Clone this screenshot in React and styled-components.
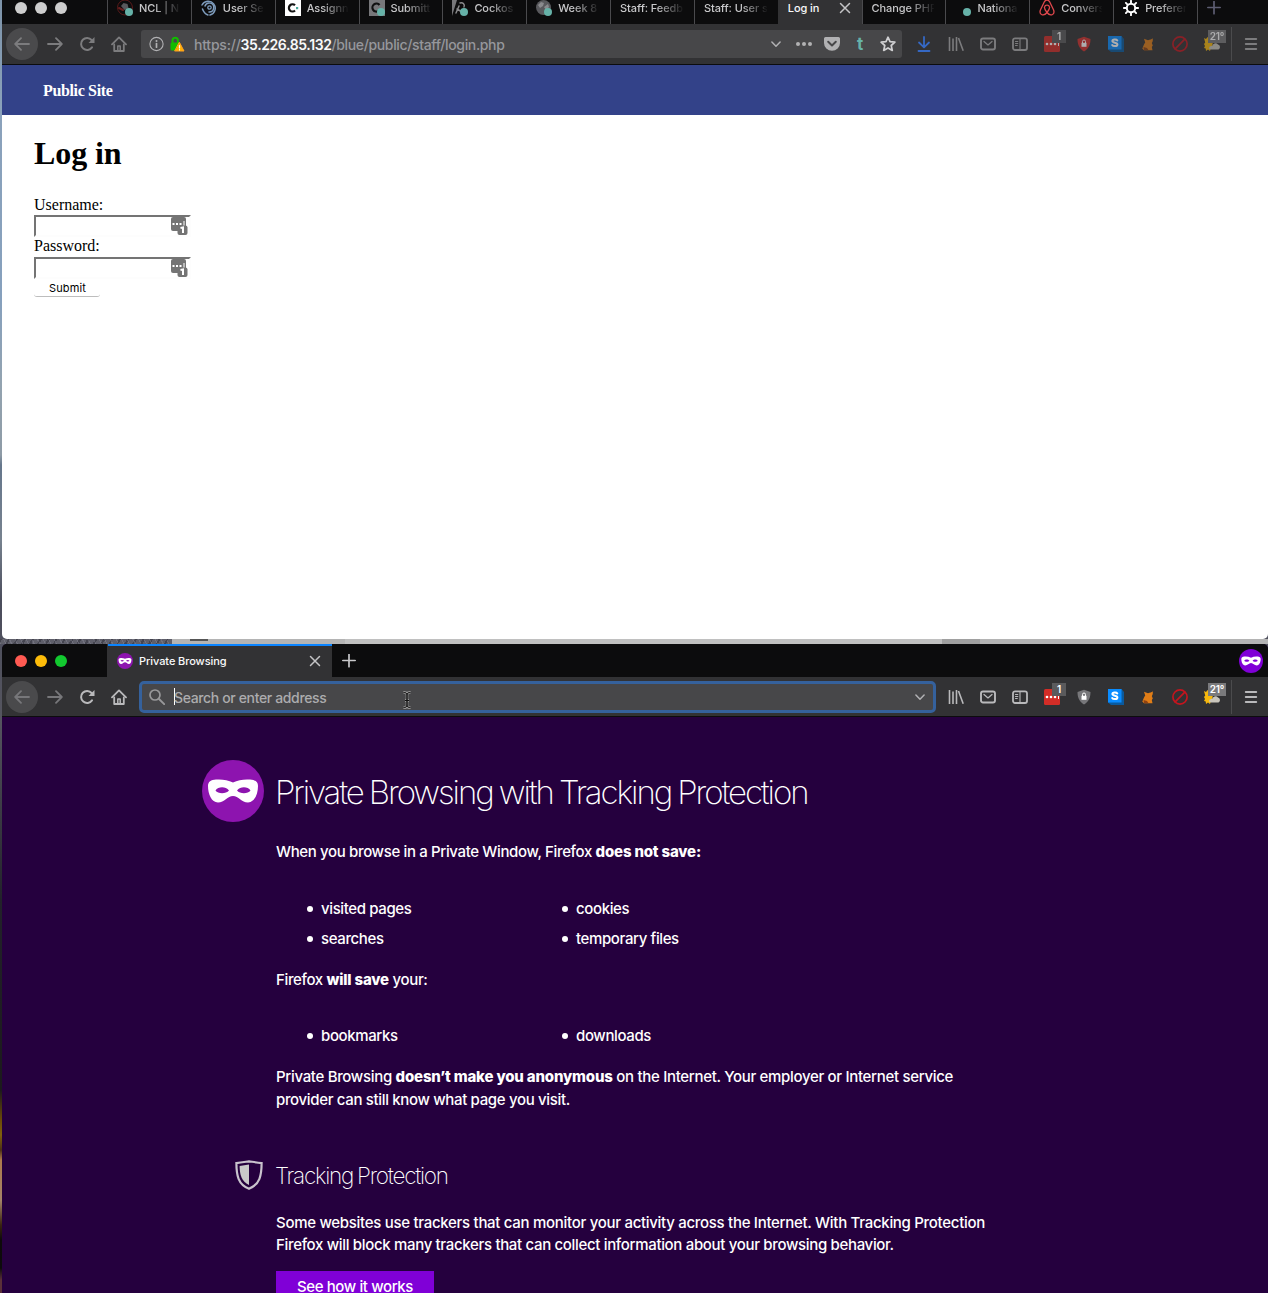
import React from "react";
import styled, { createGlobalStyle, css } from "styled-components";

const Global = createGlobalStyle`
  * { box-sizing: border-box; }
  body { margin: 0; width: 1268px; height: 1293px; overflow: hidden; background: #0c0c0d; }
  h1, h2, p, ul { margin: 0; padding: 0; font-weight: inherit; }
`;

const ui = `Inter, "Open Sans", sans-serif`;
const serif = `"Liberation Serif", "Times New Roman", serif`;

const Desktop = styled.div`
  height: 1293px;
  overflow: hidden;
  display: flex;
  flex-direction: column;
  padding-left: 2px;
  background: linear-gradient(180deg, #7d93a8 0, #8ba2bb 110px, #86a0bd 300px, #93a3b0 385px, #8e9ba6 455px, #66778c 465px, #77828f 540px, #4b4d5c 600px, #55555f 720px, #22222a 900px, #1c1a1c 1090px, #6b4a08 1120px, #80600c 1135px, #4c3014 1150px, #ad7a4c 1160px, #a58468 1200px, #3a2410 1225px, #0e0a0a 1240px, #0d0b0c 1268px, #5a3038 1280px);
`;

const Window = styled.section`
  display: flex;
  flex-direction: column;
  flex: none;
  overflow: hidden;
  ${(p) =>
    p.$back
      ? css`margin-top: -9px; height: 648px; border-radius: 0 0 5px 5px; background: #fff;`
      : css`height: 649px; border-radius: 5px 5px 0 0; background: #25003e;`}
`;

const Strip = styled.div`
  height: 33px;
  flex: none;
  display: flex;
  background: #0c0c0d;
  color: #cfcfd1;
`;

const Lights = styled.div`
  width: 105px;
  flex: none;
  padding-left: 13px;
  display: flex;
  align-items: center;
  gap: 8px;
`;
const Light = styled.i`
  width: 12px;
  height: 12px;
  border-radius: 50%;
  background: ${(p) => p.$c};
`;

const Tab = styled.div`
  width: ${(p) => p.$w || 83.85}px;
  flex: none;
  display: flex;
  align-items: center;
  gap: 6px;
  padding: 0 11px 0 9px;
  border-left: 1px solid ${(p) => (p.$active ? "#323234" : "#4a4a4d")};
  background: ${(p) => (p.$active ? "#323234" : "transparent")};
  color: ${(p) => (p.$active ? "#f9f9fa" : "#c8c8ca")};
  box-shadow: ${(p) => (p.$line ? "inset 0 2px 0 #0a84ff" : "none")};
  svg { flex: none; }
`;
const TabTitle = styled.span`
  flex: 1;
  overflow: hidden;
  white-space: nowrap;
  font: 500 11px/16px ${ui};
  letter-spacing: -0.08px;
  mask-image: ${(p) => (p.$fade ? "linear-gradient(90deg, #000 calc(100% - 26px), transparent 102%)" : "none")};
`;
const NewTab = styled.div`
  width: 33px;
  display: flex;
  align-items: center;
  justify-content: center;
  border-left: 1px solid ${(p) => (p.$sep ? "#4a4a4d" : "transparent")};
`;
const StripEnd = styled.div`
  margin-left: auto;
  padding-right: 5px;
  display: flex;
  align-items: center;
`;

const Toolbar = styled.div`
  height: ${(p) => (p.$back ? 41 : 40)}px;
  flex: none;
  display: flex;
  align-items: center;
  background: #323234;
  border-bottom: 1px solid #0c0c0d;
  color: ${(p) => (p.$back ? "#7c7c7e" : "#b9b9bb")};
`;
const Nav = styled.div`
  width: 32px;
  height: 32px;
  flex: none;
  display: flex;
  align-items: center;
  justify-content: center;
  border-radius: 50%;
  margin-right: ${(p) => (p.$round ? 1 : 0)}px;
  background: ${(p) => (p.$round ? "#4a4a4c" : "transparent")};
  color: ${(p) => (p.$dim ? "#77777a" : "inherit")};
`;
const NavGroup = styled.div`
  display: flex;
  flex: none;
  width: ${(p) => p.$w}px;
  padding-left: 4px;
`;
const UrlBar = styled.div`
  flex: none;
  display: flex;
  align-items: center;
  background: #474749;
  color: #b1b1b3;
  font: 500 14px/20px ${ui};
  ${(p) =>
    p.$focus
      ? css`width: 797px; height: 32px; border: 3px solid #35619c; border-radius: 5px; padding: 0 8px 0 7px;`
      : css`width: 761px; height: 28px; border-radius: 3px; padding: 0 0 0 7px;`}
`;
const Identity = styled.span`
  display: flex;
  gap: 5px;
  align-items: center;
`;
const Url = styled.span`
  flex: 1;
  white-space: nowrap;
  padding-top: 2px;
  margin-left: ${(p) => p.$ml}px;
  color: ${(p) => p.$c || "#96979c"};
  letter-spacing: -0.36px;
  b { color: #f9f9fa; font-weight: 600; letter-spacing: -0.4px; }
`;
const Scheme = styled.span`
  letter-spacing: -0.22px;
`;
const Caret = styled.i`
  width: 1px;
  height: 17px;
  background: #fff;
  margin-left: 9px;
`;
const UrlAct = styled.span`
  width: 28px;
  display: flex;
  justify-content: center;
  color: ${(p) => p.$c || "#b1b1b3"};
  font: 700 17px/18px ${ui};
`;
const Tools = styled.div`
  display: flex;
  flex: none;
  align-items: center;
  margin-left: ${(p) => p.$ml}px;
`;
const Tool = styled.div`
  width: ${(p) => p.$w || 32}px;
  height: 32px;
  position: relative;
  display: flex;
  align-items: center;
  justify-content: center;
  opacity: ${(p) => (p.$faded ? 0.6 : 1)};
`;
const Badge = styled.span`
  position: absolute;
  top: 2px;
  left: ${(p) => p.$l}px;
  width: ${(p) => p.$w}px;
  height: 13px;
  background: ${(p) => p.$c || "#5a5a5c"};
  color: #fff;
  font: 600 10px/13px ${ui};
  letter-spacing: -0.2px;
  text-align: center;
`;
const Divider = styled.i`
  width: 1px;
  height: 34px;
  margin-left: 3px;
  background: #4b4b4d;
`;

const SiteBar = styled.nav`
  height: 50px;
  flex: none;
  padding: 16px 0 0 41px;
  background: #334289;
  color: #fff;
  font: 700 16px/19px ${serif};
  span { letter-spacing: -0.35px; }
`;
const Login = styled.main`
  padding: 20px 0 0 32px;
  display: flex;
  flex-direction: column;
  align-items: flex-start;
  color: #000;
  font: 400 16px/18px ${serif};
  h1 { font: 700 32px/37px ${serif}; letter-spacing: -0.1px; margin-bottom: 24px; }
`;
const Field = styled.label`
  display: flex;
  flex-direction: column;
  height: ${(p) => p.$h}px;
  gap: ${(p) => p.$gap}px;
`;
const Input = styled.span`
  width: 157px;
  height: 22px;
  flex: none;
  display: flex;
  justify-content: flex-end;
  padding-right: 1px;
  border: 2px solid;
  border-color: #747474 #fdfdfd #fdfdfd #747474;
`;
const Submit = styled.button`
  width: 66px;
  height: 18px;
  padding: 0 0 0 1px;
  border: 0;
  border-bottom: 1px solid #bdbdbd;
  border-radius: 3px;
  background: #fff;
  color: #000;
  font: 400 11px/16px ${ui};
  letter-spacing: 0.1px;
`;

const Gap = styled.div`
  height: 5px;
  flex: none;
  display: flex;
  margin-left: -2px;
  background: #b4b4b4;
`;
const GapBit = styled.i`
  width: ${(p) => p.$w}px;
  height: ${(p) => p.$h || 5}px;
  background: ${(p) => p.$c};
`;
const Rock = styled(GapBit)`
  background:
    repeating-linear-gradient(63deg, rgba(150, 150, 165, 0.35) 0 1px, transparent 1px 5px),
    repeating-linear-gradient(118deg, rgba(30, 30, 40, 0.4) 0 2px, transparent 2px 7px),
    #5f5f6a;
`;

const Private = styled.main`
  color: #fff;
  font: 500 15px/22px ${ui};
  letter-spacing: -0.38px;
  padding: 43px 0 0 200px;
`;
const TitleRow = styled.div`
  display: flex;
  align-items: flex-start;
  gap: ${(p) => p.$gap}px;
  margin-left: ${(p) => p.$ml || 0}px;
  margin-top: ${(p) => p.$mt || 0}px;
  svg { flex: none; }
`;
const Title = styled.h1`
  font: 200 ${(p) => p.$s}px/40px ${ui};
  letter-spacing: ${(p) => p.$ls}px;
  word-spacing: -1px;
  margin-top: ${(p) => p.$mt}px;
  white-space: nowrap;
`;
const Body = styled.div`
  padding-left: 74px;
`;
const Line = styled.p`
  height: ${(p) => p.$h || 22}px;
  line-height: ${(p) => p.$h || 22}px;
  margin-top: ${(p) => p.$mt || 0}px;
  white-space: nowrap;
  letter-spacing: ${(p) => p.$ls || -0.36}px;
  b { font-weight: 800; letter-spacing: -0.18px; }
`;
const List = styled.ul`
  display: grid;
  grid-template-columns: 255px 255px;
  margin-top: ${(p) => p.$mt}px;
  padding-left: 31px;
  list-style: none;
  line-height: 30px;
`;
const Item = styled.li`
  display: flex;
  align-items: center;
  gap: 7px;
  height: 30px;
  &::before { content: ""; width: 6px; height: 6px; margin: 0 1px 1px 0; border-radius: 50%; background: #fff; }
`;
const Cta = styled.div`
  width: 158px;
  height: 40px;
  margin-top: 15px;
  padding-top: 5px;
  background: #8000d7;
  text-align: center;
  white-space: nowrap;
`;
const Pointer = styled.span`
  position: absolute;
  left: 402px;
  top: 691px;
  line-height: 0;
`;

/* Icons */
const Ic = ({ s = 16, vb = "0 0 16 16", children, ...r }) => (
  <svg width={s} height={s} viewBox={vb} fill="none" stroke="currentColor" strokeWidth="2" strokeLinecap="round" strokeLinejoin="round" {...r}>
    {children}
  </svg>
);
const Back = () => <Ic><path d="M15 8H1.5M7 2.2 1.2 8 7 13.8" strokeWidth="1.8" /></Ic>;
const Fwd = () => <Ic><path d="M1 8h13.5M9 2.2 14.8 8 9 13.8" strokeWidth="1.8" /></Ic>;
const Reload = () => (
  <Ic><path d="M13 11.400A6 6 0 1 1 12.600 4" /><path d="M15.500 1v6h-6z" fill="currentColor" stroke="none" /></Ic>
);
const Home = () => (
  <Ic><path d="M1 8.4 8 1.4l7 7" strokeWidth="1.8" /><path d="M3.2 8.5V15h9.6V8.5" strokeWidth="1.8" /><path d="M6.800 14.500V10h2.400v4.500" strokeWidth="1.500" /></Ic>
);
const Info = () => (
  <Ic><circle cx="8.500" cy="8" r="6.600" strokeWidth="1.100" /><path d="M8.500 7.500v3.700" strokeWidth="1.700" /><circle cx="8.500" cy="4.900" r="1" fill="currentColor" stroke="none" /></Ic>
);
const Lock = () => (
  <Ic><path d="M3.500 7V4.500a2.700 2.700 0 0 1 5.400 0V7" stroke="#12bc00" /><rect x="1.500" y="6.500" width="9" height="8" rx="1.500" fill="#12bc00" stroke="none" /><path d="m10.500 6.500 4.500 8.500H6z" fill="#ffb000" stroke="#ffa020" strokeWidth="1" /><path d="M10.500 9.500v2.500M10.500 13.700v.2" stroke="#fff" strokeWidth="1.200" /></Ic>
);
const Chevron = () => <Ic s={10} vb="0 0 10 10"><path d="M.9 3 5 7.200 9.100 3" strokeWidth="1.500" /></Ic>;
const Dots = () => <Ic><g fill="currentColor" stroke="none"><circle cx="2" cy="8" r="2" /><circle cx="8" cy="8" r="2" /><circle cx="14" cy="8" r="2" /></g></Ic>;
const Pocket = () => <Ic><path d="M1.500 1h13A1.500 1.500 0 0 1 16 2.500V7A8 7.800 0 0 1 0 7V2.500A1.500 1.500 0 0 1 1.500 1z" fill="#b1b1b3" stroke="none" /><path d="M4.200 5.800 8 9.400l3.800-3.600" stroke="#474749" /></Ic>;
const Star = () => <Ic stroke="#d0d0d2"><path d="m8 1.200 2 4.500 4.900.5-3.700 3.300 1.100 4.900L8 11.900l-4.300 2.500 1.100-4.900L1.100 6.200 6 5.700z" strokeWidth="1.700" /></Ic>;
const Download = () => <Ic stroke="#3568c4"><path d="M8 1v10M3 6.500 8 11.300l5-4.800M2.500 15h11" strokeWidth="1.800" /></Ic>;
const Library = () => <Ic><path d="M1.500 1v14M5 2.500V15M8.500 1v14M10.500 2l4.700 12.800" strokeWidth="1.600" strokeLinecap="butt" /></Ic>;
const Mail = () => <Ic><rect x="1" y="2.500" width="14" height="11" rx="2" strokeWidth="1.900" /><path d="m4 5.500 4 3.400 4-3.400" strokeWidth="1.300" /></Ic>;
const Sidebar = () => <Ic><rect x="1" y="2.300" width="14" height="11.700" rx="2" strokeWidth="1.800" /><path d="M8 3v10.500M3.500 5.500h2.300M3.500 7.500h2.300M3.500 9.500h1.800" strokeWidth="1.100" /></Ic>;
const LastPass = () => <Ic><rect width="16" height="16" rx="1.500" fill="#d32d27" stroke="none" /><g fill="#fff" stroke="none"><circle cx="3" cy="8" r="1.300" /><circle cx="7" cy="8" r="1.300" /><circle cx="11" cy="8" r="1.300" /><path d="M14 6h1v4h-1z" /></g></Ic>;
const ShieldLock = ({ c }) => <Ic><path d="M8 .8 14.500 3c0 6-2.200 10-6.500 12.500C3.700 13 1.500 9 1.500 3z" fill={c} stroke="none" /><rect x="5.500" y="6.800" width="5" height="4" fill="#fff" stroke="none" /><path d="M6.500 7V5.500a1.500 1.500 0 0 1 3 0V7" stroke="#fff" strokeWidth="1" /></Ic>;
const SIcon = () => <Ic><path d="M0 0h13.500L16 3v13H3l-3-2.500z" fill="#0a5a9e" stroke="none" /><path d="M0 0h13.500v13.500H0z" fill="#0a8cff" stroke="none" /><path d="M9.300 4.400C8.500 3 4.400 3 4.400 5.100c0 2.200 5 1.200 5 3.400 0 2.100-4.300 2-5.200.5" stroke="#fff" strokeWidth="2" /></Ic>;
const Fox = () => <Ic><path d="M12.700 2.300C11.500 3.500 10 3.800 8 4.200L4 2.800l1.200 3.700C4 8 3.300 10.500 2.300 12.500l1.700 1.700h8.500l-.7-3.200 1-1.500-1-2.500c1-1 1.200-2.500.9-4.700z" fill="#e07d17" stroke="none" /><path d="m3.500 11 3.500 1 1.500 2.200H4z" fill="#8e4312" stroke="none" /></Ic>;
const NoEntry = () => <Ic stroke="#c4151e"><circle cx="8" cy="8" r="7.100" strokeWidth="1.700" /><path d="M3.200 12.800 12.800 3.200" strokeWidth="1.700" /></Ic>;
const Weather = () => <Ic><path d="M0 2l2 1 1.500-2L5 3l2-1.500V4l2 .5-.5 4L7 12l-1 3-2-1.500L2 15l-.3-2.500L0 12l1-2-1-2 1.200-1.500z" fill="#f7b90d" stroke="none" /><path d="M5 12a2.500 2.500 0 0 1 3-2 3.500 3.500 0 0 1 6-1.500 2.700 2.700 0 0 1 .5 5H7a2 2 0 0 1-2-1.500z" fill="#c9c5bb" stroke="none" /></Ic>;
const Menu = () => <Ic><path d="M2.800 3h10.400M2.800 8h10.400M2.800 13h10.400" strokeWidth="2" /></Ic>;
const Close = () => <Ic s={12} vb="0 0 12 12"><path d="m1.500 1.500 9 9m0-9-9 9" strokeWidth="1.500" stroke="#c4c4c6" /></Ic>;
const Plus = ({ c }) => <Ic s={14} vb="0 0 14 14" stroke={c}><path d="M7 .3v12.400M.8 6.500h12.400" strokeWidth="1.700" /></Ic>;
const Search = () => <Ic><circle cx="6" cy="6" r="5" strokeWidth="1.700" stroke="#98989a" /><path d="m10 10 5.200 5.200" strokeWidth="1.900" stroke="#98989a" /></Ic>;
const Mask = ({ s, c }) => (
  <svg width={s} height={s} viewBox="0 0 62 62">
    <circle cx="31" cy="31" r="31" fill={c} />
    <path fillRule="evenodd" fill="#fff" d="M31 22.500c5-2.500 11-3.500 17-3 5 .5 8 2 8 6.500 0 8-3.500 16.500-10 16.500-6.500 0-9.500-6.500-15-6.500S22.500 42.500 16 42.500C9.500 42.500 6 34 6 26c0-4.500 3-6 8-6.500 6-.5 12 .5 17 3zM13.500 30.500c2.500 3.500 10.500 3.500 13.500 0-3.500-4.500-11-4-13.500 0zm21.500 0c3 3.500 11 3.500 13.500 0-2.500-4-10-4.500-13.500 0z" />
  </svg>
);
const Shield = () => (
  <svg width="28" height="30" viewBox="0 0 28 30"><path d="M14 1.300c4 .6 8 1.300 12.600 1.800 0 12-1.600 21.400-12.600 25.600C3 24.500 1.400 15.100 1.400 3.100 6 2.600 10 1.900 14 1.300z" fill="none" stroke="#c9c3cd" strokeWidth="2.200" /><path d="M14 4.500V25C6.500 21.500 4.800 15 4.600 6z" fill="#c9c9c9" /></svg>
);
const FillIcon = () => (
  <svg width="17" height="20" viewBox="0 0 17 20"><rect width="15" height="14" rx="2" fill="#747474" /><g fill="#fff"><rect x="1.500" y="6" width="2" height="2" /><rect x="5" y="6" width="2" height="2" /><rect x="8.500" y="6" width="2" height="2" /><rect x="12.500" y="4" width="1" height="5" /></g><rect x="6.500" y="8.500" width="10" height="9.500" rx="2" fill="#747474" /><path d="M9.500 11 12 10.500V16" stroke="#fff" strokeWidth="2" fill="none" /></svg>
);
const Teal = () => <circle cx="12" cy="12" r="4" fill="#66b2a8" stroke="none" />;
const favicons = {
  ncl: <Ic><circle cx="8" cy="7.500" r="7.500" stroke="#5a1a1a" strokeWidth="1" /><path d="M4 6l2.500-3 4 1 1 4-4 2z" fill="#58585c" stroke="none" /><path d="M2 8l4 2" stroke="#6a1f1f" strokeWidth="2" /><Teal /></Ic>,
  swirl: <Ic stroke="#7e9cbd"><path d="M1 5a7 7 0 1 1 8 10" strokeWidth="1.500" /><path d="M4 6a4.500 4.500 0 1 1 4 6M1.500 9c1 3 3 5 5.500 6" strokeWidth="1.500" /><circle cx="8.500" cy="7.500" r="1.700" strokeWidth="1.300" /></Ic>,
  c: <Ic><path d="M0 0h16v16H0z" fill="#fff" stroke="none" /><path d="M10 5.300a3.600 3.600 0 1 0 0 5.200" stroke="#111" strokeWidth="2.200" strokeLinecap="butt" /><path d="M11 7h2.200v2.200H11z" fill="#4aa99c" stroke="none" /></Ic>,
  cdim: <Ic><path d="M0 0h16v16H0z" fill="#77777a" stroke="none" /><path d="M10.500 5a4 4 0 1 0-1 6" stroke="#111" strokeWidth="2.200" strokeLinecap="butt" /><Teal /></Ic>,
  cock: <Ic><path d="M0 0h5L0 16z" fill="#77777a" stroke="none" /><path d="M4 13 7 6M5 9l5 3M8 3a3 3 0 0 1 4 4" stroke="#8a8a8c" strokeWidth="1.500" /><Teal /></Ic>,
  globe: <Ic><circle cx="7.500" cy="7.500" r="7.500" fill="#59595d" stroke="none" /><path d="M2 5l3-3 3 1-1 3-3 2zM8 7l4-3 1 3-3 3z" fill="#8a8a8e" stroke="none" /><Teal /></Ic>,
  dot: <Ic><Teal /></Ic>,
  airbnb: <Ic stroke="#e0484d"><path d="M8 12.500C6 10 5 8.500 5.500 7a2.600 2.600 0 0 1 5 0c.5 1.500-.5 3-2.500 5.500-1.500 2-3.500 3-5.500 2-2-1.200-1.700-3-1-4.700L5.500 1.500Q8-1.500 10.500 1.500l4 8.300c.7 1.700 1 3.500-1 4.700-2 1-4 0-5.500-2z" strokeWidth="1.300" /></Ic>,
  gear: <Ic stroke="#fff"><circle cx="8" cy="8" r="4.200" strokeWidth="2" /><path d="M8 .8v2M8 13.200v2M.8 8h2M13.200 8h2M2.900 2.900l1.400 1.400M11.700 11.700l1.400 1.400M2.900 13.100l1.400-1.400M11.700 4.300l1.400-1.400" strokeWidth="1.900" /></Ic>,
};

const tabs = [
  ["ncl", "NCL | N"],
  ["swirl", "User Se"],
  ["c", "Assignn"],
  ["cdim", "Submitt"],
  ["cock", "Cockos"],
  ["globe", "Week 8"],
  [null, "Staff: Feedb"],
  [null, "Staff: User s"],
  [null, "Log in", true],
  [null, "Change PHP"],
  ["dot", "Nationa"],
  ["airbnb", "Convers"],
  ["gear", "Preferen"],
];

const Extensions = ({ faded }) => (
  <>
    <Tool><Library /></Tool>
    <Tool><Mail /></Tool>
    <Tool><Sidebar /></Tool>
    <Tool $faded={faded}><LastPass /><Badge $l={16} $w={14}>1</Badge></Tool>
    <Tool $faded={faded}><ShieldLock c={faded ? "#d3302c" : "#77777a"} /></Tool>
    <Tool $faded={faded}><SIcon /></Tool>
    <Tool $faded={faded}><Fox /></Tool>
    <Tool $faded={faded}><NoEntry /></Tool>
    <Tool $faded={faded}><Weather /><Badge $l={12} $w={18} $c="#7a7a7c">21°</Badge></Tool>
    <Divider />
    <Tool $w={38}><Menu /></Tool>
  </>
);

export default function App() {
  return (
    <Desktop>
      <Global />
      <Window $back>
        <Strip>
          <Lights><Light $c="#cdcdcd" /><Light $c="#cdcdcd" /><Light $c="#cdcdcd" /></Lights>
          {tabs.map(([icon, title, active]) => (
            <Tab key={title} $active={active}>
              {icon && favicons[icon]}
              <TabTitle $fade={!active}>{title}</TabTitle>
              {active && <Close />}
            </Tab>
          ))}
          <NewTab $sep><Plus c="#5d5d72" /></NewTab>
        </Strip>
        <Toolbar $back>
          <NavGroup $w={139}>
            <Nav $round><Back /></Nav><Nav><Fwd /></Nav><Nav><Reload /></Nav><Nav><Home /></Nav>
          </NavGroup>
          <UrlBar>
            <Identity><Info /><Lock /></Identity>
            <Url $ml={9}><Scheme>https://</Scheme><b>35.226.85.132</b>/blue/public/staff/login.php</Url>
            <UrlAct><Chevron /></UrlAct>
            <UrlAct><Dots /></UrlAct>
            <UrlAct><Pocket /></UrlAct>
            <UrlAct $c="#66b2a8">t</UrlAct>
            <UrlAct><Star /></UrlAct>
          </UrlBar>
          <Tools $ml={6}><Tool><Download /></Tool><Extensions faded /></Tools>
        </Toolbar>
        <SiteBar><span>Public Site</span></SiteBar>
        <Login>
          <h1>Log in</h1>
          <Field $h={41} $gap={1}><span>Username:</span><Input><FillIcon /></Input></Field>
          <Field $h={42} $gap={2}><span>Password:</span><Input><FillIcon /></Input></Field>
          <Submit>Submit</Submit>
        </Login>
      </Window>
      <Gap>
        <Rock $w={172} />
        <GapBit $w={18} $c="#b4b4b4" />
        <GapBit $w={18} $h={2} $c="#555" />
        <GapBit $w={137} $c="#b4b4b4" />
        <GapBit $w={597} $c="#c0c0c0" />
        <GapBit $w={38} $c="#a0a0a0" />
      </Gap>
      <Window>
        <Strip>
          <Lights><Light $c="#ff5a52" /><Light $c="#fdbc09" /><Light $c="#12c92f" /></Lights>
          <Tab $w={225} $active $line>
            <Mask s={16} c="#8d14af" />
            <TabTitle>Private Browsing</TabTitle>
            <Close />
          </Tab>
          <NewTab><Plus c="#c8c8ca" /></NewTab>
          <StripEnd><Mask s={24} c="#8000d7" /></StripEnd>
        </Strip>
        <Toolbar>
          <NavGroup $w={137}>
            <Nav $round $dim><Back /></Nav><Nav $dim><Fwd /></Nav><Nav><Reload /></Nav><Nav><Home /></Nav>
          </NavGroup>
          <UrlBar $focus>
            <Search /><Caret />
            <Url $ml={-1} $c="#acacae">Search or enter address</Url>
            <Chevron />
          </UrlBar>
          <Tools $ml={4}><Extensions /></Tools>
        </Toolbar>
        <Private>
          <TitleRow $gap={11}>
            <Mask s={62} c="#8d14af" />
            <Title $s={33} $ls={-2.1} $mt={12}>Private Browsing with Tracking Protection</Title>
          </TitleRow>
          <Body>
            <Line $mt={19}>When you browse in a Private Window, Firefox <b>does not save:</b></Line>
            <List $mt={31}><Item>visited pages</Item><Item>cookies</Item><Item>searches</Item><Item>temporary files</Item></List>
            <Line $mt={15}>Firefox <b>will save</b> your:</Line>
            <List $mt={30}><Item>bookmarks</Item><Item>downloads</Item></List>
            <Line $mt={14} $h={23} $ls={-0.32}>Private Browsing <b>doesn’t make you anonymous</b> on the Internet. Your employer or Internet service</Line>
            <Line $h={23} $ls={-0.34}>provider can still know what page you visit.</Line>
          </Body>
          <TitleRow $gap={12} $ml={33} $mt={49}>
            <Shield />
            <Title as="h2" $s={22.5} $ls={-1.24} $mt={-4}>Tracking Protection</Title>
          </TitleRow>
          <Body>
            <Line $mt={16} $ls={-0.295}>Some websites use trackers that can monitor your activity across the Internet. With Tracking Protection</Line>
            <Line $ls={-0.33}>Firefox will block many trackers that can collect information about your browsing behavior.</Line>
            <Cta>See how it works</Cta>
          </Body>
        </Private>
      </Window>
      <Pointer>
        <svg width="10" height="18" viewBox="0 0 10 18" fill="none"><path d="M1.500 1.500Q5 1 5 4v10q0 3-3.500 2.500M8.500 1.500Q5 1 5 4v10q0 3 3.500 2.500M3 9.500h4" stroke="#aaa" strokeWidth="2.500" /><path d="M1.500 1.500Q5 1 5 4v10q0 3-3.500 2.500M8.500 1.500Q5 1 5 4v10q0 3 3.500 2.500M3 9.500h4" stroke="#111" strokeWidth="1" /></svg>
      </Pointer>
    </Desktop>
  );
}
